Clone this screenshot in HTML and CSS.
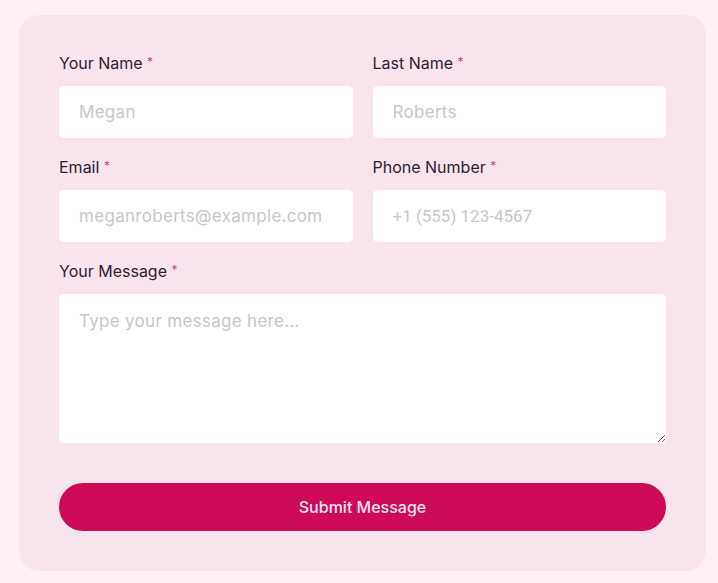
FILE: index.html
```html
<!DOCTYPE html>
<html lang="en">
<head><meta charset="UTF-8">
<meta name="viewport" content="width=device-width,initial-scale=1.0">
<title>Contact Form</title>
<link rel="stylesheet" href="styles.css">
</head>
<body>

<form class="contact-card">
  <div class="grid">
    <label class="field">
      <span class="label">Your Name <i>*</i></span>
      <input type="text" placeholder="Megan">
    </label>
    <label class="field">
      <span class="label">Last Name <i>*</i></span>
      <input type="text" placeholder="Roberts">
    </label>
    <label class="field">
      <span class="label">Email <i>*</i></span>
      <input type="email" placeholder="meganroberts@example.com">
    </label>
    <label class="field">
      <span class="label">Phone Number <i>*</i></span>
      <input type="tel" class="phone" placeholder="+1 (555) 123-4567">
    </label>
    <label class="field wide">
      <span class="label">Your Message <i>*</i></span>
      <textarea placeholder="Type your message here..."></textarea>
    </label>
  </div>
  <button type="button" class="submit-btn">Submit Message</button>
</form>

</body>
</html>
```

FILE: styles.css
```css
*,*::before,*::after{box-sizing:border-box;margin:0;padding:0}
body{
  background:#fdf0f4;
  font-family:'Inter','Noto Sans',sans-serif;
  padding:15px 12px 12px 19px;
}

/* === CARD === */
.contact-card{
  width:687px;
  background:#f8e4ec;
  border-radius:20px;
  padding:38px 40px 40px 40px;
}

.grid{
  display:grid;
  grid-template-columns:minmax(0,1fr) minmax(0,1fr);
  column-gap:20px;
  row-gap:19px;
}
.field{display:flex;flex-direction:column;min-width:0}
.field.wide{grid-column:1 / -1}

.label{
  font-size:16px;
  line-height:20px;
  color:#2b2331;
  margin-bottom:13px;
}
.label i{font-style:normal;color:#d0457a;font-size:12px;vertical-align:top;position:relative;top:-1px}

/* === INPUTS === */
input,textarea{
  width:100%;
  border:none;
  outline:none;
  background:#fff;
  border-radius:5px;
  font-family:inherit;
  font-size:17px;
  letter-spacing:.3px;
  color:#333;
  padding:0 20px;
}
input{height:52px}
textarea{
  height:149px;
  padding:17px 20px;
  resize:vertical;
}
input::placeholder,textarea::placeholder{color:#c9c6c9}
.phone{font-family:'Roboto',sans-serif;letter-spacing:0}

/* === SUBMIT === */
.submit-btn{
  display:block;
  width:100%;
  height:48px;
  margin-top:40px;
  border:none;
  border-radius:24px;
  background:#cc0a58;
  color:#fde4ee;
  font-family:inherit;
  font-size:16px;
  font-weight:500;
  cursor:pointer;
}
```
